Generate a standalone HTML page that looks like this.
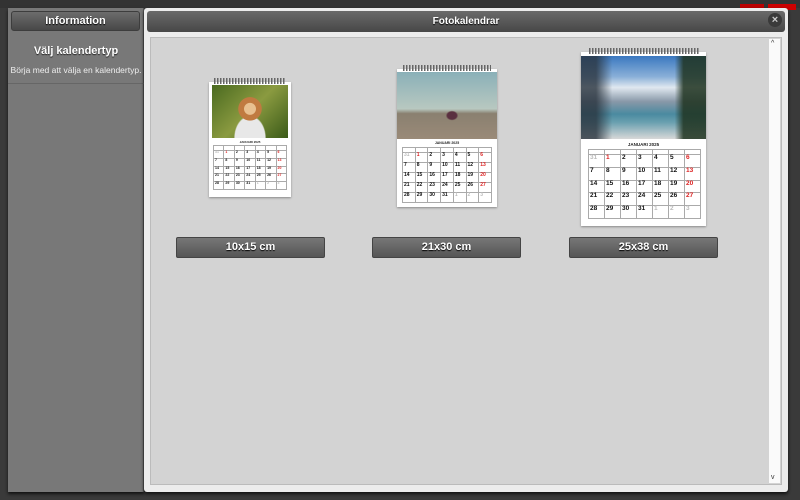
<!DOCTYPE html>
<html><head><meta charset="utf-8">
<style>
*{margin:0;padding:0;box-sizing:border-box}
body{width:800px;height:500px;overflow:hidden;background:#3a3a3a;font-family:"Liberation Sans Narrow","Liberation Sans",sans-serif;position:relative}
.topbar{position:absolute;left:0;top:0;width:800px;height:8px;background:#333}
.red1{position:absolute;left:740px;top:4px;width:24px;height:6px;background:#b00}
.red2{position:absolute;left:768px;top:4px;width:28px;height:6px;background:#c00}
.left{position:absolute;left:8px;top:8px;width:136px;height:484px;background:#787878;border-right:1px solid #555;box-shadow:0 2px 3px #111}
.hbtn{position:absolute;left:3px;top:3px;width:129px;height:20px;border-radius:3px;background:linear-gradient(#6c6c6c,#484848);border:1px solid #3d3d3d;color:#fff;font-weight:bold;font-size:11px;text-align:center;line-height:18px;text-shadow:0 1px 1px #000}
.lt{position:absolute;left:0;top:37px;width:136px;text-align:center;color:#fff;font-weight:bold;font-size:11px;text-shadow:0 1px 1px #222}
.ls{position:absolute;left:0;top:57px;width:136px;text-align:center;color:#eee;font-size:8.5px;white-space:nowrap}
.lline{position:absolute;left:0;top:75px;width:136px;height:1px;background:#666}
.main{position:absolute;left:144px;top:8px;width:644px;height:484px;background:#ececec;border-radius:3px;box-shadow:0 2px 3px #111}
.title{position:absolute;left:3px;top:3px;width:638px;height:21px;border-radius:3px;background:linear-gradient(#6a6a6a,#474747);color:#fff;font-weight:bold;font-size:10px;text-align:center;line-height:21px;text-shadow:0 1px 1px #000}
.close{position:absolute;right:6px;top:5px;width:14px;height:14px;border-radius:50%;background:#3a3a3a;color:#ccc;font-size:11px;line-height:14px;text-align:center;font-weight:bold}
.content{position:absolute;left:6px;top:29px;width:632px;height:448px;background:#d3d3d3;border:1px solid #bbb}
.scroll{position:absolute;right:1px;top:1px;width:11px;height:444px;background:#fafafa}
.scroll span{position:absolute;left:2px;font-size:7px;color:#333}
.cal{position:absolute;background:#fff;box-shadow:0 1px 2px rgba(0,0,0,.35)}
.spir{position:absolute;left:6%;width:88%;top:-4px;height:6px;background:repeating-linear-gradient(90deg,#666 0 1.4px,transparent 1.4px 3px)}
.ph{position:absolute;left:0;width:100%}
.ct{position:absolute;width:100%;text-align:center;font-weight:bold;color:#222}
table{position:absolute;border-collapse:collapse;table-layout:fixed}
td{border:1px solid #aaa;font-weight:bold;color:#111;vertical-align:top;padding-left:1px;line-height:1}
td.s{color:#d22}td.g{color:#bbb}
tr.h td{font-size:2px;color:#777;height:auto}
.btn{position:absolute;top:237px;width:149px;height:21px;border-radius:2px;background:linear-gradient(#777,#555);border:1px solid #444;color:#fff;font-weight:bold;font-size:11px;text-align:center;line-height:19px;text-shadow:0 1px 1px #000}
</style></head><body>
<div class="topbar"></div><div class="red1"></div><div class="red2"></div>
<div class="left">
 <div class="hbtn">Information</div>
 <div class="lt">Välj kalendertyp</div>
 <div class="ls">Börja med att välja en kalendertyp.</div>
 <div class="lline"></div>
</div>
<div class="main">
 <div class="title">Fotokalendrar</div>
 <div class="close">×</div>
 <div class="content"><div class="scroll"><span style="top:1px">^</span><span style="bottom:2px">v</span></div></div>
</div>

<div class="cal" style="left:209px;top:82px;width:82px;height:115px">
 <div class="spir"></div>
 <div class="ph" style="left:3px;width:76px;top:3px;height:53px;background:radial-gradient(circle at 50% 45%,#e8c090 0 12%,#c07a40 13% 24%,transparent 25%),radial-gradient(ellipse at 50% 100%,#e8e8e8 0 28%,transparent 30%),linear-gradient(135deg,#4a6a20,#8a9a40 50%,#3a5a18)"></div>
 <div class="ct" style="top:58px;font-size:3px">JANUARI 2025</div>
 <table style="left:4px;top:63px;width:74px;height:45px;font-size:3.5px">
 <tr class="h"><td>&nbsp;</td><td></td><td></td><td></td><td></td><td></td><td></td></tr>
 <tr><td class="g">31</td><td class="s">1</td><td>2</td><td>3</td><td>4</td><td>5</td><td class="s">6</td></tr>
 <tr><td>7</td><td>8</td><td>9</td><td>10</td><td>11</td><td>12</td><td class="s">13</td></tr>
 <tr><td>14</td><td>15</td><td>16</td><td>17</td><td>18</td><td>19</td><td class="s">20</td></tr>
 <tr><td>21</td><td>22</td><td>23</td><td>24</td><td>25</td><td>26</td><td class="s">27</td></tr>
 <tr><td>28</td><td>29</td><td>30</td><td>31</td><td class="g">1</td><td class="g">2</td><td class="g">3</td></tr>
 </table>
</div>

<div class="cal" style="left:397px;top:69px;width:100px;height:138px">
 <div class="spir"></div>
 <div class="ph" style="top:3px;height:67px;background:radial-gradient(ellipse at 55% 65%,#5a3040 0 6%,transparent 8%),linear-gradient(#8ab0b8 0%,#b8c8c0 55%,#8a8070 62%,#9a8a78 100%)"></div>
 <div class="ct" style="top:72px;font-size:3.5px">JANUARI 2025</div>
 <table style="left:5px;top:78px;width:90px;height:56px;font-size:5px">
 <tr class="h"><td>&nbsp;</td><td></td><td></td><td></td><td></td><td></td><td></td></tr>
 <tr><td class="g">31</td><td class="s">1</td><td>2</td><td>3</td><td>4</td><td>5</td><td class="s">6</td></tr>
 <tr><td>7</td><td>8</td><td>9</td><td>10</td><td>11</td><td>12</td><td class="s">13</td></tr>
 <tr><td>14</td><td>15</td><td>16</td><td>17</td><td>18</td><td>19</td><td class="s">20</td></tr>
 <tr><td>21</td><td>22</td><td>23</td><td>24</td><td>25</td><td>26</td><td class="s">27</td></tr>
 <tr><td>28</td><td>29</td><td>30</td><td>31</td><td class="g">1</td><td class="g">2</td><td class="g">3</td></tr>
 </table>
</div>

<div class="cal" style="left:581px;top:52px;width:125px;height:174px">
 <div class="spir"></div>
 <div class="ph" style="top:4px;height:83px;background:linear-gradient(90deg,rgba(40,50,60,.8) 0 12%,transparent 25% 75%,rgba(30,50,30,.85) 82%),linear-gradient(#3a78c0 0%,#8ab0d8 25%,#e0e8f0 38%,#8898a8 55%,#4a8aa0 70%,#6aa0b0 80%,#d8d8d8 100%)"></div>
 <div class="ct" style="top:90px;font-size:4.5px">JANUARI 2025</div>
 <table style="left:7px;top:97px;width:113px;height:70px;font-size:6.5px">
 <tr class="h"><td>&nbsp;</td><td></td><td></td><td></td><td></td><td></td><td></td></tr>
 <tr><td class="g">31</td><td class="s">1</td><td>2</td><td>3</td><td>4</td><td>5</td><td class="s">6</td></tr>
 <tr><td>7</td><td>8</td><td>9</td><td>10</td><td>11</td><td>12</td><td class="s">13</td></tr>
 <tr><td>14</td><td>15</td><td>16</td><td>17</td><td>18</td><td>19</td><td class="s">20</td></tr>
 <tr><td>21</td><td>22</td><td>23</td><td>24</td><td>25</td><td>26</td><td class="s">27</td></tr>
 <tr><td>28</td><td>29</td><td>30</td><td>31</td><td class="g">1</td><td class="g">2</td><td class="g">3</td></tr>
 </table>
</div>

<div class="btn" style="left:176px">10x15 cm</div>
<div class="btn" style="left:372px">21x30 cm</div>
<div class="btn" style="left:569px">25x38 cm</div>
</body></html>
